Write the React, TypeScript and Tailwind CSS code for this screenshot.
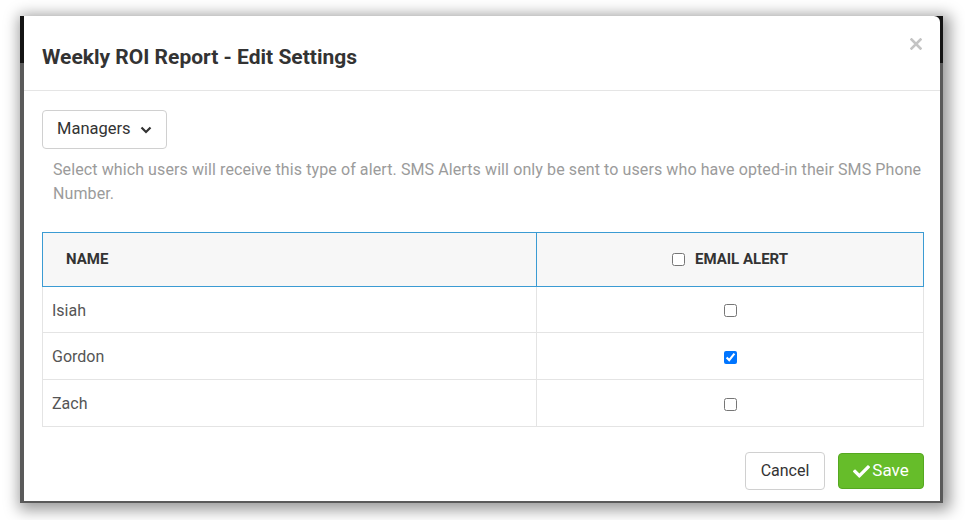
import { FaCheck } from "react-icons/fa"
import clsx from "clsx"

interface Recipient {
	id: string
	name: string
	email: boolean
}

const recipients: Recipient[] = [
	{ id: "1", name: "Isiah", email: false },
	{ id: "2", name: "Gordon", email: true },
	{ id: "3", name: "Zach", email: false },
]

function CloseIcon() {
	return (
		<svg width="12" height="12" viewBox="0 0 12 12" className="block">
			<path d="M1.5 1.5 L10.5 10.5 M10.5 1.5 L1.5 10.5" stroke="#c4c4c4" strokeWidth="2.6" strokeLinecap="square" />
		</svg>
	)
}

function ChevronDown() {
	return (
		<svg width="12" height="8" viewBox="0 0 12 8" className="block">
			<path d="M1.5 1.5 L6 6 L10.5 1.5" fill="none" stroke="#333" strokeWidth="2.2" />
		</svg>
	)
}

/**
 * Alert recipients modal, captured over the dimmed page behind it.
 */
export default function App() {
	return (
		<div
			className="w-[965px] h-[520px] bg-white pl-[20px] pt-[16px]"
			style={{ fontFamily: "Roboto, 'Liberation Sans', sans-serif" }}
		>
			<div className="grid w-[923px] h-[487px] shadow-[3px_3px_14px_4px_rgba(0,0,0,0.4)]">
				{/* dimmed page behind the modal */}
				<div className="col-start-1 row-start-1 flex flex-col">
					<div className="h-[47px] bg-[#141414]" />
					<div className="flex-1 bg-[#5a5a5a]" />
				</div>

				<div className="col-start-1 row-start-1 ml-[4px] mr-[3px] mb-[2px] flex flex-col rounded-tr-[6px] bg-white">
					<div className="flex justify-between border-b border-[#e5e5e5] pl-[18px] pr-[18px] pt-[27px] pb-[19px]">
						<h1 className="text-[21px] leading-[28px] font-bold text-[#333]">Weekly ROI Report - Edit Settings</h1>
						<button className="-mt-[5px] self-start">
							<CloseIcon />
						</button>
					</div>

					<div className="flex flex-1 flex-col pl-[18px] pr-[16px]">
						<div className="mt-[19px]">
							<button className="flex h-[39px] w-[125px] items-center gap-[9px] rounded-[4px] border border-[#d0d0d0] pl-[14px] text-[16.5px] text-[#333]">
								Managers
								<ChevronDown />
							</button>
						</div>

						<p className="mt-[9px] pl-[11px] text-[16px] leading-[24px] tracking-[0.1px] text-[#9b9b9b]">
							Select which users will receive this type of alert. SMS Alerts will only be sent to users who have opted-in their SMS Phone
							Number.
						</p>

						<div className="mt-[26px] w-[882px]">
							<div className="flex h-[55px] border border-[#3b9bd3] bg-[#f7f7f7] text-[15px] font-bold text-[#333]">
								<div className="flex w-[494px] items-center border-r border-[#3b9bd3] pl-[23px]">NAME</div>
								<div className="flex flex-1 items-center justify-center gap-[10px]">
									<input type="checkbox" className="m-0 h-[13px] w-[13px]" readOnly />
									EMAIL ALERT
								</div>
							</div>
							{recipients.map((r, i) => (
								<div
									key={r.id}
									className={clsx(
										"flex border-x border-b border-[#e4e4e4] text-[16px] text-[#555]",
										i === 0 ? "h-[46px]" : "h-[47px]",
									)}
								>
									<div className="flex w-[494px] items-center border-r border-[#e4e4e4] pt-[2px] pl-[9px]">{r.name}</div>
									<div className="flex flex-1 items-center justify-center pt-[2px]">
										<input type="checkbox" className="m-0 h-[13px] w-[13px]" defaultChecked={r.email} />
									</div>
								</div>
							))}
						</div>

						<div className="mt-[25px] flex items-center justify-end gap-[13px]">
							<button className="h-[38px] w-[80px] rounded-[4px] border border-[#d0d0d0] text-[16px] text-[#333]">Cancel</button>
							<button className="flex h-[36px] w-[86px] items-center justify-center gap-[2px] rounded-[4px] border border-[#55a820] bg-[#66bd2a] text-[17px] text-white">
								<FaCheck className="h-[17px] w-[17px]" />
								Save
							</button>
						</div>
					</div>
				</div>
			</div>
		</div>
	)
}
